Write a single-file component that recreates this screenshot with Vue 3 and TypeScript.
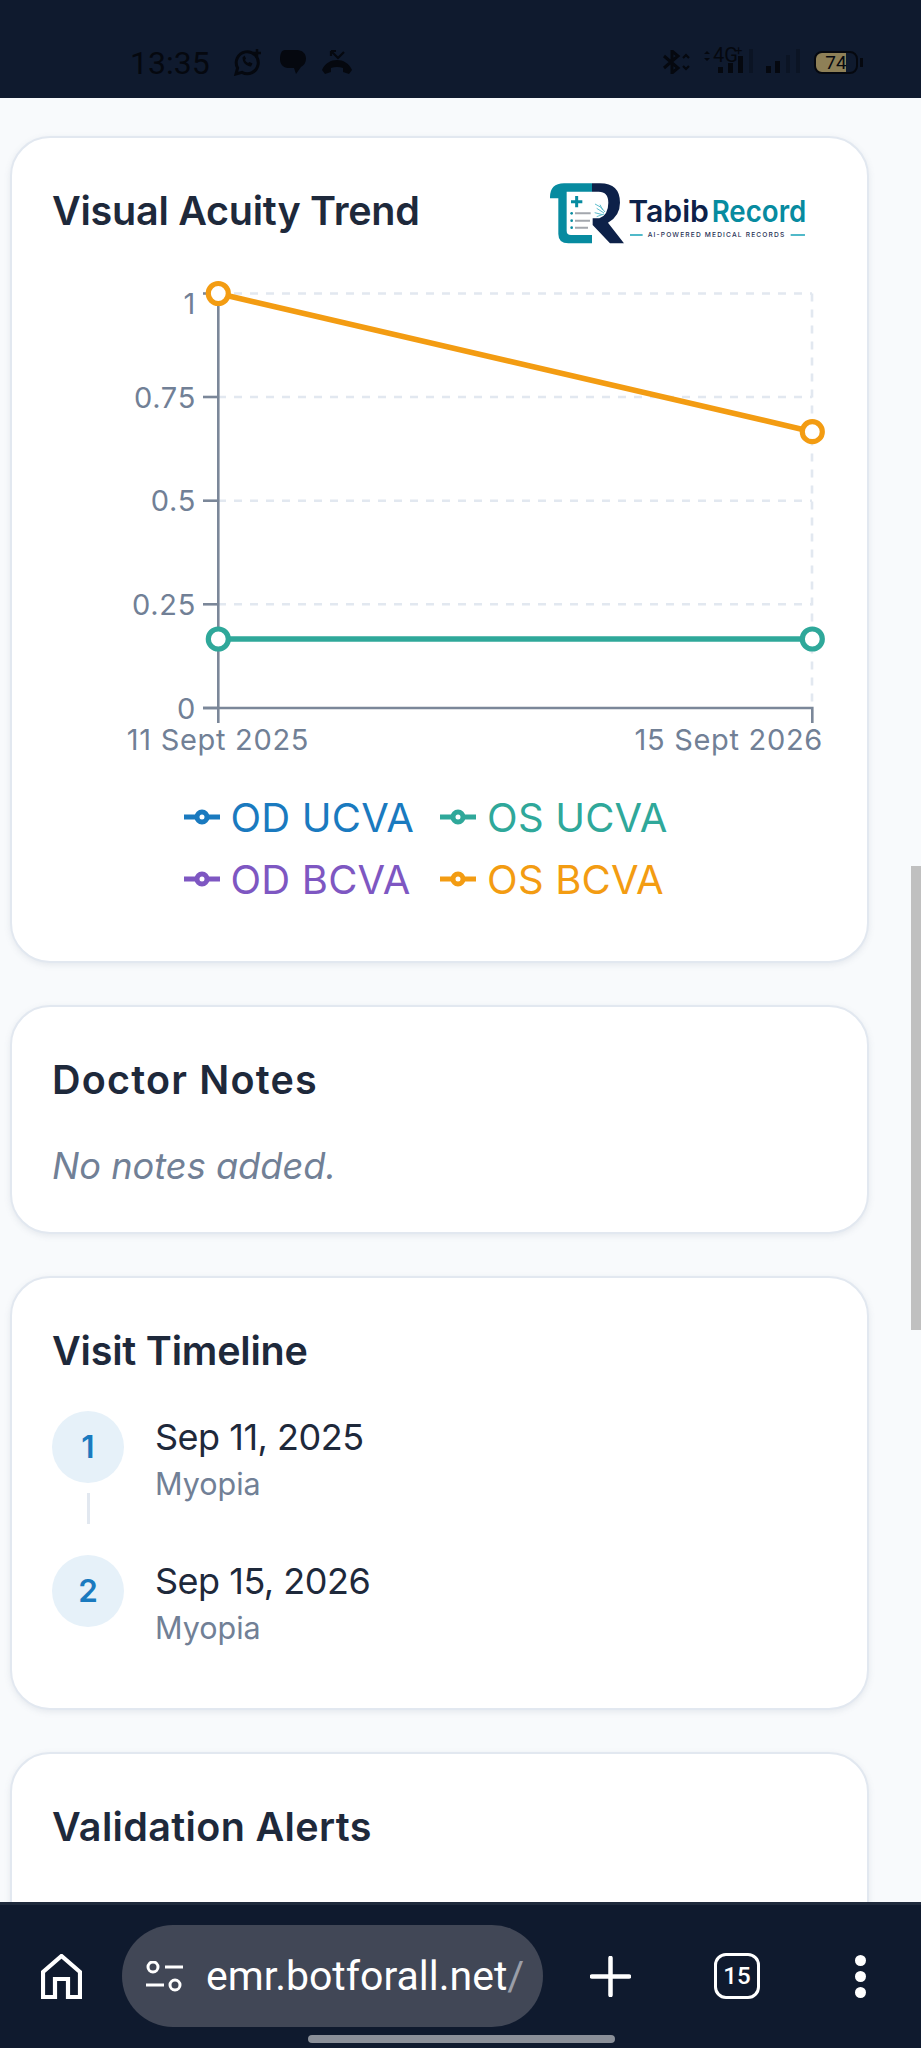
<script setup lang="ts">
interface LegendItem {
  label: string;
  color: string;
}

interface Visit {
  id: number;
  date: string;
  diagnosis: string;
}

const yTicks = [
  { label: "1", y: 293.5, textY: 314 },
  { label: "0.75", y: 397, textY: 407.5 },
  { label: "0.5", y: 500.7, textY: 511 },
  { label: "0.25", y: 604.3, textY: 615 },
  { label: "0", y: 708, textY: 718.5 },
];

const legend: LegendItem[] = [
  { label: "OD UCVA", color: "#1a7abf" },
  { label: "OS UCVA", color: "#2fa89a" },
  { label: "OD BCVA", color: "#7e57c2" },
  { label: "OS BCVA", color: "#f39c12" },
];

const visits: Visit[] = [
  { id: 1, date: "Sep 11, 2025", diagnosis: "Myopia" },
  { id: 2, date: "Sep 15, 2026", diagnosis: "Myopia" },
];
</script>

<template>
  <div class="phone">
    <header class="status">
      <span class="time">13:35</span>
      <svg class="ic-wa" width="30" height="28" viewBox="0 0 30 28" fill="none" stroke="#05080f" stroke-width="3">
        <path d="M3 26l1.6-6A11 11 0 1 1 9 24.4z" />
        <path d="M9.5 9.5c0 5 3.5 8.5 8.5 9l1.5-3-3-1.5-1.5 1c-1.500-.8-2.500-1.800-3-3l1-1.500-1.500-3z" fill="#05080f" stroke="none" />
        <path d="M24 1v8M20 5h8" stroke-width="2.500" />
      </svg>
      <svg class="ic-msg" width="26" height="24" viewBox="0 0 26 24" fill="#05080f">
        <path d="M5 0h12c5 0 9 3.500 9 8.500 0 4-2 7-5 8.500l-5 7-2-6H8C3.500 18 0 14 0 9.500 0 4 1.500 0 5 0z" />
      </svg>
      <svg class="ic-call" width="32" height="24" viewBox="0 0 32 24" fill="none" stroke="#05080f">
        <path d="M1 20c3-7 9-10 15-10s12 3 15 10l-3 4-6-2v-4c-4-1.500-8-1.500-12 0v4l-6 2z" fill="#05080f" stroke="none" />
        <path d="M10 1l7 7 6-6M10 1v5M10 1h5" stroke-width="2.200" />
      </svg>
      <span class="spacer"></span>
      <svg class="ic-bt" width="28" height="24" viewBox="0 0 28 24" fill="none" stroke="#05080f" stroke-width="3">
        <path d="M2 6l14 12-6 5V1l6 5L2 18" />
        <path d="M21 8l3-3 3 3M21 16l3 3 3-3" stroke-width="2.200" />
      </svg>
      <svg class="ic-net" width="52" height="30" viewBox="0 -4 52 30">
        <path d="M1 6l3-3 3 3zM1 10l3 3 3-3z" fill="#05080f" />
        <text x="10" y="14" class="net-text">4G</text>
        <text x="32" y="7" class="plus-text">+</text>
        <rect x="15" y="19" width="5" height="6" fill="#05080f" />
        <rect x="25" y="15" width="5" height="10" fill="#05080f" />
        <rect x="35" y="8" width="5" height="17" fill="#05080f" />
        <rect x="46" y="1" width="4" height="24" fill="#0b1424" />
      </svg>
      <svg class="ic-sig" width="36" height="26" viewBox="0 0 36 26">
        <rect x="1" y="18" width="5" height="7" fill="#05080f" />
        <rect x="10" y="13" width="5" height="12" fill="#05080f" />
        <rect x="21" y="7" width="4" height="18" fill="#0b1424" />
        <rect x="31" y="1" width="4" height="24" fill="#0b1424" />
      </svg>
      <div class="battery">
        <div class="battery-body"><span>74</span></div>
        <div class="battery-tip"></div>
      </div>
    </header>

    <main class="content">
      <section class="card">
        <div class="chart-head">
          <h2 class="t-trend">Visual Acuity Trend</h2>
          <svg class="logo" width="282" height="63" viewBox="545 178 282 63">
            <g transform="translate(500 160) scale(0.3333)">
              <path d="M150 112Q150 70 192 70H276V95H200V212Q200 225 213 225H276V250H205Q175 250 175 222V115H150Z" fill="#078ba0" />
              <path d="M276 70H300Q360 70 360 128Q360 168 324 188L372 250H330L278 195V175H298Q325 165 325 128Q325 95 296 95H276Z" fill="#0d2149" />
              <path d="M230 108V142M213 125H247" stroke="#078ba0" stroke-width="9" />
              <circle cx="215" cy="160" r="4" fill="#078ba0" />
              <circle cx="215" cy="182" r="4" fill="#078ba0" />
              <circle cx="215" cy="203" r="4" fill="#078ba0" />
              <path d="M225 160H272M225 182H270M225 203H264" stroke="#a3a7ad" stroke-width="6" />
              <path d="M285 132l18 10 12 14M290 145l22 14M284 158l24 6M290 170l22-8M300 134l8 16" stroke="#5cbccb" stroke-width="3" fill="none" />
              <text x="385" y="185" class="logo-word" fill="#0d2149" textLength="242" lengthAdjust="spacingAndGlyphs">Tabib</text>
              <text x="635" y="185" class="logo-word" fill="#078ba0" textLength="284" lengthAdjust="spacingAndGlyphs">Record</text>
              <path d="M390 225H428M872 225H915" stroke="#17a2b8" stroke-width="5" />
              <text x="443" y="232" class="logo-tag" textLength="410">AI-POWERED MEDICAL RECORDS</text>
            </g>
          </svg>
        </div>

        <svg class="chart" width="775" height="500" viewBox="52 270 775 500">
          <g stroke="#e2e8f0" stroke-width="2.600" stroke-dasharray="8 8">
            <line v-for="t in yTicks.slice(0, 4)" :key="t.label" x1="218" :y1="t.y" x2="812" :y2="t.y" />
            <line x1="812" y1="293.500" x2="812" y2="708" />
          </g>
          <g stroke="#7b8799" stroke-width="2.600" fill="none">
            <path d="M218.300 293.500V723" />
            <path d="M203 708H812.300V723" />
            <line v-for="t in yTicks" :key="t.label" x1="203" :y1="t.y" x2="218" :y2="t.y" />
          </g>
          <text v-for="t in yTicks" :key="t.label" x="196" :y="t.textY" text-anchor="end" class="tick">{{ t.label }}</text>
          <text x="218" y="750" text-anchor="middle" class="tick">11 Sept 2025</text>
          <text x="823" y="750" text-anchor="end" class="tick">15 Sept 2026</text>

          <path d="M218.300 639H812.300" stroke="#2fa89a" stroke-width="5.600" />
          <path d="M218.300 293.500L812.300 431.700" stroke="#f39c12" stroke-width="5.600" />
          <g fill="#fff" stroke-width="5.200">
            <circle cx="218.300" cy="639" r="10" stroke="#2fa89a" />
            <circle cx="812.300" cy="639" r="10" stroke="#2fa89a" />
            <circle cx="218.300" cy="293.500" r="10" stroke="#f39c12" />
            <circle cx="812.300" cy="431.700" r="10" stroke="#f39c12" />
          </g>
        </svg>

        <ul class="legend">
          <li v-for="item in legend" :key="item.label" :style="{ color: item.color }">
            <svg width="36" height="16" viewBox="0 0 36 16" fill="none" stroke="currentColor" stroke-width="5">
              <path d="M0 8H12M24 8H36" />
              <circle cx="18" cy="8" r="5" fill="#fff" />
            </svg>
            <span>{{ item.label }}</span>
          </li>
        </ul>
      </section>

      <section class="card">
        <h2 class="t-notes">Doctor Notes</h2>
        <p class="notes">No notes added.</p>
      </section>

      <section class="card">
        <h2 class="t-visit">Visit Timeline</h2>
        <ol class="timeline">
          <li v-for="(visit, i) in visits" :key="visit.id" class="visit">
            <div class="badge">{{ visit.id }}</div>
            <div v-if="i < visits.length - 1" class="connector"></div>
            <div>
              <div class="date">{{ visit.date }}</div>
              <div class="diagnosis">{{ visit.diagnosis }}</div>
            </div>
          </li>
        </ol>
      </section>

      <section class="card card-last">
        <h2 class="t-alerts">Validation Alerts</h2>
      </section>

      <div class="scrollbar"></div>
    </main>

    <footer class="browser">
      <div class="browser-row">
        <svg width="41" height="45" viewBox="0 0 41 45" fill="none" stroke="#fff" stroke-width="4.200">
          <path d="M2 43V18L20.500 2 39 18V43H27V25H14V43Z" />
        </svg>
        <div class="url">
          <svg width="37" height="31" viewBox="0 0 37 31" fill="none" stroke="#fff" stroke-width="3">
            <circle cx="7" cy="6" r="5" />
            <path d="M19 6H37M0 24H18" />
            <circle cx="29" cy="24" r="5" />
          </svg>
          <span class="url-text">emr.botforall.net<span class="slash">/</span></span>
        </div>
        <svg class="plus" width="41" height="41" viewBox="0 0 41 41" stroke="#fff" stroke-width="4.500" stroke-linecap="round">
          <path d="M20.500 2V39M2 20.500H39" />
        </svg>
        <div class="tabs">15</div>
        <div class="dots"><i></i><i></i><i></i></div>
      </div>
      <div class="handle"></div>
    </footer>
  </div>
</template>

<style>
html,
body {
  margin: 0;
  background: #f8fafc;
}
</style>

<style scoped>
.phone {
  width: 921px;
  height: 2048px;
  display: flex;
  flex-direction: column;
  overflow: hidden;
  font-family: Inter, "Noto Sans", sans-serif;
  background: #f8fafc;
}

.status {
  height: 98px;
  flex: none;
  display: flex;
  align-items: center;
  box-sizing: border-box;
  padding: 26px 58px 0 130px;
  background: #0f1a2e;
}

.time {
  font-family: Roboto, sans-serif;
  font-size: 32px;
  color: #05080f;
  width: 79px;
  margin-top: 1px;
}

.ic-wa {
  margin-left: 24px;
}

.ic-msg {
  margin-left: 17px;
}

.ic-call {
  margin-left: 15px;
}

.spacer {
  flex: 1;
}

.ic-bt {
  margin-right: 13px;
}

.ic-net {
  margin-right: 10px;
  margin-top: -7px;
}

.ic-sig {
  margin-right: 13px;
  margin-top: -3px;
}

.net-text {
  font-family: Roboto, sans-serif;
  font-size: 20px;
  fill: #05080f;
}

.plus-text {
  font-family: Roboto, sans-serif;
  font-size: 13px;
  fill: #05080f;
}

.battery {
  display: flex;
  align-items: center;
  gap: 2px;
}

.battery-body {
  width: 44px;
  height: 23px;
  box-sizing: border-box;
  border: 2px solid #05080f;
  border-radius: 8px;
  background: linear-gradient(to right, #8e8057 75%, transparent 75%);
  display: flex;
  align-items: center;
  justify-content: center;
  font-family: Roboto, sans-serif;
  font-size: 19px;
  line-height: 19px;
  color: #05080f;
}

.battery-tip {
  width: 3px;
  height: 9px;
  background: #05080f;
}

.content {
  position: relative;
  flex: 1;
  min-height: 0;
  overflow: hidden;
  box-sizing: border-box;
  padding: 38px 0 0 10px;
}

.card {
  width: 859px;
  box-sizing: border-box;
  padding: 40px 40px 42px;
  margin-bottom: 42px;
  background: #fff;
  border: 2.500px solid #e2e8f0;
  border-radius: 40px;
  box-shadow: 0 2px 6px rgba(100, 116, 139, 0.13);
}

.card-last {
  min-height: 400px;
}

h2 {
  margin: 0 0 -4px;
  font-size: 39.500px;
  line-height: 67px;
  font-weight: 560;
  color: #1e293b;
}

.t-trend {
  letter-spacing: -0.250px;
}

.t-notes {
  letter-spacing: 1.200px;
}

.t-visit {
  letter-spacing: -0.200px;
}

.t-alerts {
  letter-spacing: 0.350px;
}

.chart-head {
  display: flex;
  align-items: flex-start;
  justify-content: space-between;
}

.logo {
  display: block;
  overflow: visible;
}

.logo-word {
  font-family: Inter, sans-serif;
  font-size: 90px;
  font-weight: 600;
}

.logo-tag {
  font-family: Inter, sans-serif;
  font-size: 20px;
  font-weight: 500;
  fill: #1f2f55;
}

.chart {
  display: block;
  margin-top: 29px;
}

.tick {
  font-size: 29px;
  letter-spacing: 0.700px;
  fill: #718096;
}

.legend {
  list-style: none;
  margin: 16px 28px 9px 0;
  padding: 0;
  display: grid;
  grid-template-columns: auto auto;
  justify-content: center;
  column-gap: 26px;
}

.legend li {
  height: 62px;
  display: flex;
  align-items: center;
  gap: 11px;
  font-size: 40px;
  letter-spacing: 0.200px;
}

.notes {
  margin: 32px 0 0;
  font-size: 36.200px;
  line-height: 48px;
  font-style: italic;
  color: #718096;
}

.timeline {
  list-style: none;
  margin: 29.500px 0 0;
  padding: 0;
}

.visit {
  position: relative;
  display: flex;
  gap: 31px;
  min-height: 110px;
  margin-bottom: 34px;
}

.visit:last-child {
  min-height: 111.500px;
  margin-bottom: 0;
}

.badge {
  width: 72px;
  height: 72px;
  flex: none;
  border-radius: 50%;
  background: #e6f1f9;
  color: #1a7abf;
  font-size: 31.500px;
  font-weight: 600;
  display: flex;
  align-items: center;
  justify-content: center;
}

.connector {
  position: absolute;
  left: 34.500px;
  top: 82px;
  width: 3px;
  height: 31px;
  background: #e2e8f0;
}

.date {
  font-size: 36px;
  line-height: 52px;
  font-weight: 400;
  letter-spacing: -0.500px;
  color: #1e293b;
}

.diagnosis {
  font-size: 30.500px;
  line-height: 42px;
  color: #718096;
}

.scrollbar {
  position: absolute;
  right: 0;
  top: 768px;
  width: 10px;
  height: 464px;
  background: #c0c0c0;
}

.browser {
  height: 146px;
  flex: none;
  box-sizing: border-box;
  border-top: 3px solid #1f2a3c;
  background: #0f1a2e;
}

.browser-row {
  display: flex;
  align-items: center;
  padding: 20px 0 0 41px;
}

.url {
  width: 421px;
  height: 102px;
  margin-left: 40px;
  box-sizing: border-box;
  padding-left: 24px;
  border-radius: 51px;
  background: #414756;
  display: flex;
  align-items: center;
  gap: 23px;
}

.url-text {
  font-family: Roboto, sans-serif;
  font-size: 41px;
  color: #fff;
  white-space: nowrap;
}

.slash {
  color: #9a9ea8;
}

.plus {
  margin-left: 47px;
}

.tabs {
  width: 46px;
  height: 46px;
  margin-left: 83px;
  box-sizing: border-box;
  border: 3.500px solid #fff;
  border-radius: 12px;
  color: #fff;
  font-family: Roboto, sans-serif;
  font-size: 24px;
  font-weight: 500;
  display: flex;
  align-items: center;
  justify-content: center;
}

.dots {
  margin-left: 95px;
  display: flex;
  flex-direction: column;
  gap: 5px;
}

.dots i {
  display: block;
  width: 11px;
  height: 11px;
  border-radius: 50%;
  background: #fff;
}

.handle {
  width: 307px;
  height: 8px;
  margin: 8px 0 0 308px;
  border-radius: 4px;
  background: #8a8f98;
}
</style>
